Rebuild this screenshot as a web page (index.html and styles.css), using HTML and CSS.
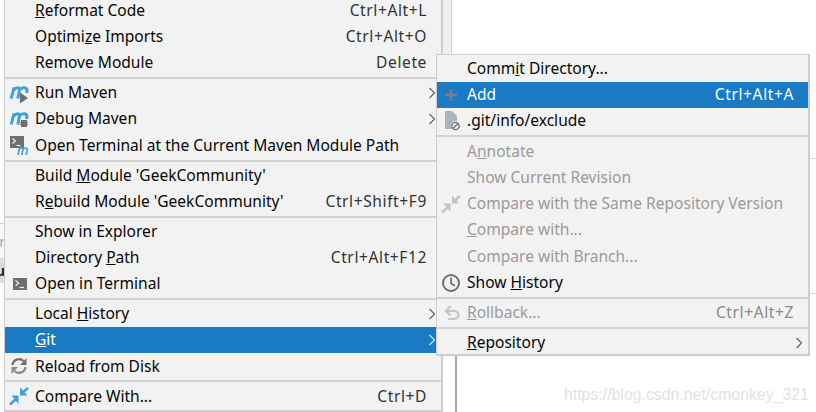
FILE: index.html
```html
<!DOCTYPE html>
<html lang="en">
<head>
<meta charset="utf-8">
<title>Git menu</title>
<link rel="stylesheet" href="styles.css">
</head>
<body>
<div class="editor">
  <div class="panel-strip"></div>
  <div class="panel-rule"></div>
  <div class="side-tab one"><span>r</span></div>
  <div class="side-tab two"><span>u</span></div>
  <div class="right-rule top"></div>
  <div class="right-rule bottom"></div>

  <div class="menu main-menu">
    <div class="row"><span class="label"><u>R</u>eformat Code</span><span class="key">Ctrl+Alt+L</span></div>
    <div class="row"><span class="label">Optimi<u>z</u>e Imports</span><span class="key">Ctrl+Alt+O</span></div>
    <div class="row"><span class="label">Remove Module</span><span class="key">Delete</span></div>
    <div class="sep"></div>
    <div class="row"><svg class="icon" viewBox="0 0 20 20"><path d="M2.200 15.500 5 4.500M4.800 7C7 4 10.500 4 10.500 7L8.800 15.500M10.500 7C12.500 4 18 4 18 7.500L17.500 10" fill="none" stroke="#3f9fd8" stroke-width="3"/><path d="M11 9.500 19 15l-8 5.500z" fill="#6e6e6e"/></svg><span class="label">Run Maven</span><svg class="chev" viewBox="0 0 8 12"><path d="M1.500 1 6.500 6l-5 5" /></svg></div>
    <div class="row"><svg class="icon" viewBox="0 0 20 20"><path d="M2.200 15.500 5 4.500M4.800 7C7 4 10.500 4 10.500 7L8.800 15.500M10.500 7C12.500 4 18 4 18 7.500L17.500 10" fill="none" stroke="#3f9fd8" stroke-width="3"/><path d="M12 11h6v2h1v1h-1v1h1v1h-1v2h-6v-2h-1v-1h1v-1h-1v-1h1z" fill="#6e6e6e"/></svg><span class="label">Debug Maven</span><svg class="chev" viewBox="0 0 8 12"><path d="M1.500 1 6.500 6l-5 5" /></svg></div>
    <div class="row"><svg class="icon" viewBox="0 0 20 20"><path d="M1 1h14v12H1z" fill="#6e6e6e"/><path d="M3.500 3.500l3 2.500-3 2.500" fill="none" stroke="#f2f2f2" stroke-width="1.200"/><path d="M7.500 10.500h4" stroke="#f2f2f2" stroke-width="1.200"/><path d="M9 20l1.600-7.500M10.400 14c1.500-1.500 3.600-1.500 3.600.2L12.800 20M14 14c1.500-1.500 4.500-1.500 4.300.5L17.200 20" fill="none" stroke="#3f9fd8" stroke-width="1.600"/></svg><span class="label">Open Terminal at the Current Maven Module Path</span></div>
    <div class="sep"></div>
    <div class="row"><span class="label">Build <u>M</u>odule 'GeekCommunity'</span></div>
    <div class="row"><span class="label">R<u>e</u>build Module 'GeekCommunity'</span><span class="key">Ctrl+Shift+F9</span></div>
    <div class="sep"></div>
    <div class="row"><span class="label">Show in Explorer</span></div>
    <div class="row"><span class="label">Directory <u>P</u>ath</span><span class="key">Ctrl+Alt+F12</span></div>
    <div class="row"><svg class="icon" viewBox="0 0 20 20"><path d="M4 4h14v12H4z" fill="#6e6e6e"/><path d="M6.500 6.500l3.200 2.700-3.200 2.700" fill="none" stroke="#f2f2f2" stroke-width="1.200"/><path d="M10.500 13.500h4.500" stroke="#f2f2f2" stroke-width="1.200"/></svg><span class="label">Open in Terminal</span></div>
    <div class="sep"></div>
    <div class="row"><span class="label">Local <u>H</u>istory</span><svg class="chev" viewBox="0 0 8 12"><path d="M1.500 1 6.500 6l-5 5" /></svg></div>
    <div class="row active"><span class="label"><u>G</u>it</span><svg class="chev" viewBox="0 0 8 12"><path d="M1.500 1 6.500 6l-5 5" /></svg></div>
    <div class="row"><svg class="icon" viewBox="0 0 20 20"><path d="M3.500 9A6.500 6.500 0 0 1 14.500 5" fill="none" stroke="#6e6e6e" stroke-width="2.400"/><path d="M17.500 2v7h-6.500z" fill="#6e6e6e"/><path d="M16.500 11A6.500 6.500 0 0 1 5.500 15" fill="none" stroke="#8a8a8a" stroke-width="2.400"/><path d="M2.500 18v-7H9z" fill="#8a8a8a"/></svg><span class="label">Reload from Disk</span></div>
    <div class="sep"></div>
    <div class="row"><svg class="icon" viewBox="0 0 20 20"><path d="M1 18.500 7 13" stroke="#3f9fd8" stroke-width="2.400" fill="none"/><path d="M2.500 9.500h7V18z" fill="#3f9fd8"/><path d="M13 7l6-5" stroke="#3f9fd8" stroke-width="2.400" fill="none"/><path d="M11 1.500v8h7.500z" fill="#3f9fd8"/></svg><span class="label">Compare With...</span><span class="key">Ctrl+D</span></div>
  </div>

  <div class="menu git-menu">
    <div class="row"><span class="label">Comm<u>i</u>t Directory...</span></div>
    <div class="row active"><svg class="icon" viewBox="0 0 20 20"><path d="M4 10h12M10 4v12" stroke="#7e7c7c" stroke-width="2.400" fill="none"/></svg><span class="label">Add</span><span class="key">Ctrl+Alt+A</span></div>
    <div class="row"><svg class="icon" viewBox="0 0 20 20"><path d="M4 0h7l5 5v5a5 5 0 0 0-5 8H4z" fill="#a9b3bb"/><circle cx="14.500" cy="15" r="3.700" fill="#f2f2f2" stroke="#6e6e6e" stroke-width="1.300"/><path d="M12 17.500l5-5" stroke="#6e6e6e" stroke-width="1.300"/></svg><span class="label">.git/info/exclude</span></div>
    <div class="sep"></div>
    <div class="row off"><span class="label">A<u>n</u>notate</span></div>
    <div class="row off"><span class="label">Show Current Revision</span></div>
    <div class="row off"><svg class="icon" viewBox="0 0 20 20"><path d="M1 18.500 7 13" stroke="#c4c4c4" stroke-width="2.400" fill="none"/><path d="M2.500 9.500h7V18z" fill="#c4c4c4"/><path d="M13 7l6-5" stroke="#c4c4c4" stroke-width="2.400" fill="none"/><path d="M11 1.500v8h7.500z" fill="#c4c4c4"/></svg><span class="label">Compare with the Same Repository Version</span></div>
    <div class="row off"><span class="label"><u>C</u>ompare with...</span></div>
    <div class="row off"><span class="label">Compare with Branch...</span></div>
    <div class="row"><svg class="icon" viewBox="0 0 20 20"><circle cx="10" cy="10" r="8" fill="none" stroke="#6e6e6e" stroke-width="2"/><path d="M10 4.500v6l4 2.200" fill="none" stroke="#6e6e6e" stroke-width="1.700"/></svg><span class="label">Show <u>H</u>istory</span></div>
    <div class="sep"></div>
    <div class="row off"><svg class="icon" viewBox="0 0 20 20"><path d="M6 8h7.500a4 4 0 0 1 0 8H7" fill="none" stroke="#c4c4c4" stroke-width="2.200"/><path d="M9.500 3 5 8l4.500 4.500" fill="none" stroke="#c4c4c4" stroke-width="2.200"/></svg><span class="label"><u>R</u>ollback...</span><span class="key">Ctrl+Alt+Z</span></div>
    <div class="sep"></div>
    <div class="row"><span class="label"><u>R</u>epository</span><svg class="chev" viewBox="0 0 8 12"><path d="M1.500 1 6.500 6l-5 5" /></svg></div>
  </div>

  <div class="watermark">https://blog.csdn.net/cmonkey_321</div>
</div>
</body>
</html>
```
FILE: styles.css
```css
* { box-sizing: border-box; }
html, body { margin: 0; padding: 0; background: #fff; }
.editor { position: relative; width: 816px; height: 412px; overflow: hidden; font-family: "Noto Sans", "Open Sans", sans-serif; font-size: 15.55px; color: #060606; }
.panel-strip { position: absolute; left: 443px; top: 0; width: 9px; height: 60px; background: #efefef; border-right: 1px solid #d4d4d4; }
.panel-rule { position: absolute; left: 455px; top: 300px; width: 2px; height: 112px; background: #aaa; }
.side-tab { position: absolute; left: 0; width: 5px; overflow: hidden; display: flex; justify-content: flex-end; align-items: center; font-size: 14px; }
.side-tab.one { top: 223px; height: 35px; background: #f6f6f6; border-top: 1px solid #ccc; color: #7fb6d8; }
.side-tab.two { top: 258px; height: 25px; background: #dcdcdc; font-weight: 700; color: #222; }
.right-rule { position: absolute; left: 808px; width: 8px; height: 1px; background: #d4d4d4; }
.right-rule.top { top: 158px; }
.right-rule.bottom { top: 293px; }
.menu { position: absolute; background: #f2f2f2; border: solid #cdcdcd; border-width: 1px 2px 2px 1px; display: flex; flex-direction: column; }
.main-menu { left: 4px; top: -4px; width: 439px; height: 416px; padding-top: .6px; }
.git-menu { left: 436px; top: 54px; width: 374px; height: 302px; padding-top: .5px; }
.row { height: 26.200px; flex: none; display: flex; align-items: center; padding: 0 14px 0 30px; position: relative; white-space: nowrap; line-height: 1; }
.git-menu .row { height: 26.300px; }
.label { flex: 1; }
.key { color: #333; margin-left: 20px; letter-spacing: .6px; }
.row .icon { position: absolute; left: 4px; top: 3px; width: 20px; height: 20px; }
.chev { position: absolute; right: 5px; top: 7px; width: 8px; height: 12px; fill: none; stroke: #666; stroke-width: 1.200; }
.active { background: #1a7bc4; color: #fff; }
.active .key { color: #fff; }
.active .chev { stroke: #cfe4f4; }
.off { color: #9a9a9a; }
.off .key { color: #8a8a8a; }
.sep { height: 3.800px; flex: none; position: relative; }
.sep::before { content: ""; position: absolute; left: 0; right: 0; top: 1px; height: 2px; background: #d2d2d2; }
.watermark { position: absolute; left: 564px; top: 386px; font-family: "Liberation Sans", sans-serif; font-size: 15.85px; color: #e2e2e2; white-space: nowrap; }
```
